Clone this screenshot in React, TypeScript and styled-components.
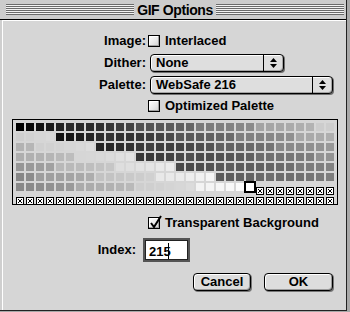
import React from "react";
import styled, { createGlobalStyle } from "styled-components";

const GlobalStyle = createGlobalStyle`
  html, body {
    margin: 0;
    padding: 0;
    background: #a8a8a8;
  }
  * {
    box-sizing: border-box;
  }
`;

const FONT = `"Liberation Sans", Arial, sans-serif`;

// websafe palette, index 0 = 000000, 215 = ffffff, shown as gray
const LEVELS = [0, 0.2, 0.4, 0.6, 0.8, 1];
const grayFor = (i: number) => {
  const r = LEVELS[Math.floor(i / 36)];
  const g = LEVELS[Math.floor(i / 6) % 6];
  const b = LEVELS[i % 6];
  const y = 0.2126 * Math.pow(r, 1.5) + 0.7152 * Math.pow(g, 1.5) + 0.0722 * Math.pow(b, 1.5);
  const v = Math.round(255 * Math.pow(y, 1 / 1.5));
  return `rgb(${v},${v},${v})`;
};

const Window = styled.div`
  width: 347px;
  height: 311px;
  display: flex;
  flex-direction: column;
  background: #cfcfcf;
  border-right: 1px solid #222;
  border-bottom: 1px solid #222;
  font-family: ${FONT};
  font-weight: bold;
  font-size: 13px;
  color: #000;
`;

const TitleBar = styled.div`
  height: 20px;
  display: flex;
  align-items: center;
  padding: 0 2px 0 6px;
  border-bottom: 1px solid #000;
  background: #cccccc;
`;

const Stripes = styled.div`
  flex: 1;
  height: 11px;
  background: repeating-linear-gradient(
    to bottom,
    #6a6a6a 0 1px,
    #f2f2f2 1px 2px
  );
`;

const Title = styled.div`
  padding: 0 3px;
  font-size: 14px;
  letter-spacing: -0.4px;
  line-height: 14px;
`;

const Body = styled.div`
  flex: 1;
  display: flex;
  flex-direction: column;
  background: #d6d6d6;
  border-left: 1px solid #fff;
  border-top: 1px solid #fff;
  margin-left: 2px;
`;

const Row = styled.div<{ $top: number }>`
  display: flex;
  align-items: center;
  margin-top: ${(p) => p.$top}px;
  min-height: 18px;
`;

const Label = styled.div<{ $width: number }>`
  width: ${(p) => p.$width}px;
  text-align: right;
  padding-right: 2px;
  line-height: 14px;
`;

const Box = styled.span`
  position: relative;
  width: 12px;
  height: 12px;
  border: 1px solid #000;
  background: linear-gradient(135deg, #ffffff 0%, #e6e6e6 60%, #cfcfcf 100%);
  box-shadow: inset -1px -1px 0 #a0a0a0, inset 1px 1px 0 #fff;
  flex: none;
`;

const CheckMark = styled.svg`
  position: absolute;
  left: 0;
  top: -3px;
  overflow: visible;
`;

const CheckText = styled.span`
  margin-left: 5px;
  line-height: 14px;
`;

const CheckRow = styled.label`
  display: flex;
  align-items: center;
`;

const Popup = styled.div<{ $width: number }>`
  width: ${(p) => p.$width}px;
  height: 18px;
  display: flex;
  border: 1px solid #000;
  border-radius: 4px;
  background: #dedede;
  box-shadow: inset 1px 1px 0 #fff, inset -1px -1px 0 #a4a4a4, 1px 1px 0 #6f6f6f;
  margin-left: 2px;
`;

const PopupText = styled.div`
  flex: 1;
  padding-left: 5px;
  line-height: 16px;
`;

const PopupArrows = styled.div`
  width: 20px;
  border-left: 1px solid #000;
  display: flex;
  align-items: center;
  justify-content: center;
`;

const Palette = styled.div`
  margin: 4px 0 0 9px;
  width: 326px;
  padding: 3px;
  border: 1px solid #000;
  display: grid;
  grid-template-columns: repeat(32, 8px);
  grid-auto-rows: 8px;
  gap: 2px;
`;

const Swatch = styled.div<{ $selected?: boolean }>`
  width: 8px;
  height: 8px;
  ${(p) => (p.$selected ? "outline: 2px solid #000; position: relative; z-index: 1;" : "")}
`;

const Input = styled.div`
  width: 47px;
  height: 24px;
  border: 2px solid #555;
  outline: 1px solid #222;
  outline-offset: -3px;
  background: #fff;
  padding: 3px 0 0 4px;
  line-height: 15px;
  margin-left: 5px;
`;

const Caret = styled.span`
  display: inline-block;
  width: 1px;
  height: 16px;
  background: #000;
  margin-left: -3px;
  vertical-align: -3px;
`;

const Buttons = styled.div`
  display: flex;
  justify-content: flex-end;
  gap: 13px;
  padding-right: 13px;
  margin-top: 11px;
`;

const Button = styled.button<{ $width: number }>`
  width: ${(p) => p.$width}px;
  height: 18px;
  border: 1px solid #000;
  border-radius: 4px;
  background: #dddddd;
  box-shadow: inset 1px 1px 0 #fff, inset -1px -1px 0 #9a9a9a, 1px 1px 0 #777;
  font-family: ${FONT};
  font-weight: bold;
  font-size: 13px;
  line-height: 14px;
  color: #000;
  padding: 0;
`;

const Arrows = () => (
  <svg width="7" height="10" viewBox="0 0 7 10">
    <path d="M3.5 0 L7 4 H0 Z M0 6 H7 L3.5 10 Z" fill="#000" />
  </svg>
);

const EmptySwatch = () => (
  <svg width="8" height="8" viewBox="0 0 8 8">
    <rect x="0.5" y="0.5" width="7" height="7" fill="#fff" stroke="#000" />
    <path d="M2 2 L6 6 M6 2 L2 6" stroke="#000" strokeWidth="1" />
  </svg>
);

const Check = ({ checked, children }: { checked?: boolean; children: React.ReactNode }) => (
  <CheckRow>
    <Box>
      {checked && (
        <CheckMark width="14" height="14" viewBox="0 0 14 14">
          <path d="M2 8 L5 12 L12 1" stroke="#000" strokeWidth="2" fill="none" />
        </CheckMark>
      )}
    </Box>
    <CheckText>{children}</CheckText>
  </CheckRow>
);

export default function App() {
  const cells = Array.from({ length: 256 }, (_, i) => i);
  return (
    <>
      <GlobalStyle />
      <Window>
        <TitleBar>
          <Stripes />
          <Title>GIF Options</Title>
          <Stripes />
        </TitleBar>
        <Body>
          <Row $top={11}>
            <Label $width={145}>Image:</Label>
            <Check>Interlaced</Check>
          </Row>
          <Row $top={4}>
            <Label $width={145}>Dither:</Label>
            <Popup $width={134}>
              <PopupText>None</PopupText>
              <PopupArrows>
                <Arrows />
              </PopupArrows>
            </Popup>
          </Row>
          <Row $top={4}>
            <Label $width={145}>Palette:</Label>
            <Popup $width={183}>
              <PopupText>WebSafe 216</PopupText>
              <PopupArrows>
                <Arrows />
              </PopupArrows>
            </Popup>
          </Row>
          <Row $top={3}>
            <Label $width={145} />
            <Check>Optimized Palette</Check>
          </Row>
          <Palette>
            {cells.map((i) =>
              i < 216 ? (
                <Swatch key={i} $selected={i === 215} style={{ background: grayFor(i) }} />
              ) : (
                <Swatch key={i}>
                  <EmptySwatch />
                </Swatch>
              )
            )}
          </Palette>
          <Row $top={9}>
            <Label $width={145} />
            <Check checked>Transparent Background</Check>
          </Row>
          <Row $top={6}>
            <Label $width={135}>Index:</Label>
            <Input>
              215
              <Caret />
            </Input>
          </Row>
          <Buttons>
            <Button $width={58}>Cancel</Button>
            <Button $width={69}>OK</Button>
          </Buttons>
        </Body>
      </Window>
    </>
  );
}
